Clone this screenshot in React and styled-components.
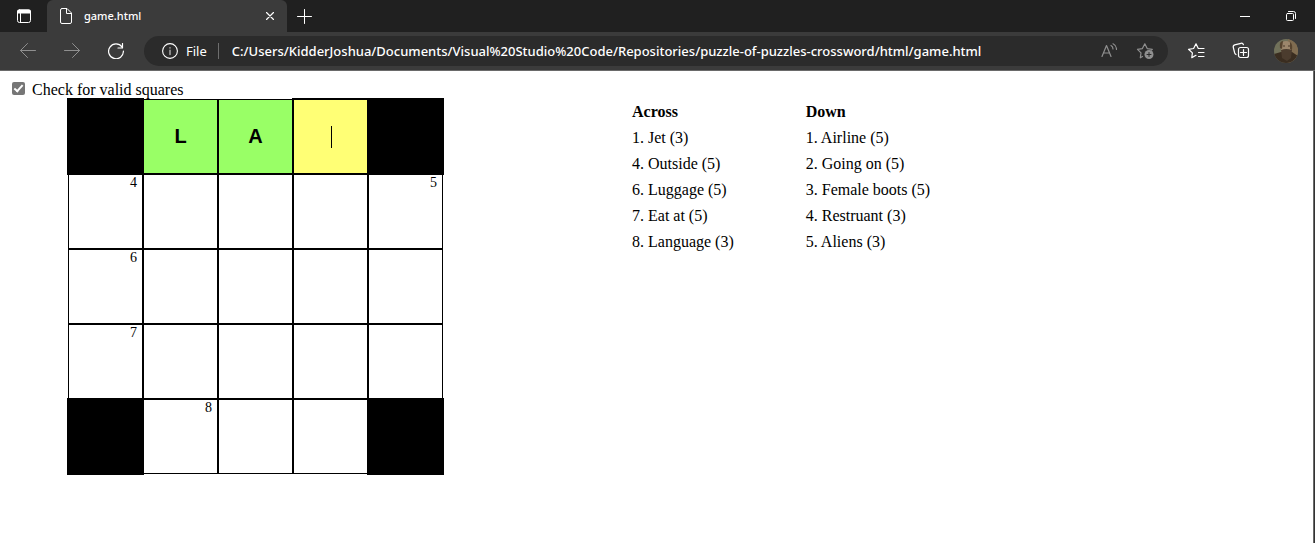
import React, { useState } from "react";
import styled, { createGlobalStyle, css } from "styled-components";

const GlobalStyle = createGlobalStyle`
  *, *::before, *::after { box-sizing: border-box; }
  html, body, #root { height: 100%; }
  body { margin: 0; background: #fff; color: #000; }
`;

const Window = styled.div`
  display: flex;
  flex-direction: column;
  min-height: 100%;
`;

const Chrome = styled.header`
  color: #fff;
  background: #3b3b3b;
  font-family: "Noto Sans", "Open Sans", sans-serif;
  border-bottom: 1px solid #6a6a6a;
`;

const TabStrip = styled.div`
  display: flex;
  align-items: center;
  height: 32px;
  background: #202020;
`;

const ChromeButton = styled.button`
  display: flex;
  align-items: center;
  justify-content: center;
  flex: none;
  width: ${(p) => p.$width}px;
  height: 32px;
  padding: 0;
  border: 0;
  background: none;
  color: ${(p) => (p.$dim ? "#8f8f8f" : "#fff")};

  svg { display: block; }
`;

const Tab = styled.div`
  display: flex;
  align-items: center;
  width: 240px;
  height: 32px;
  padding-left: 11px;
  background: #3b3b3b;
  border-radius: 6px 6px 0 0;
`;

const TabTitle = styled.span`
  flex: 1;
  padding-left: 10px;
  font-size: 11px;
  font-weight: 500;
  line-height: 16px;
`;

const WindowControls = styled.div`
  display: flex;
  margin-left: auto;
`;

const Toolbar = styled.nav`
  display: flex;
  align-items: center;
  height: 38px;
  padding: 0 6px;
`;

const AddressBar = styled.div`
  display: flex;
  align-items: center;
  flex: 1;
  min-width: 0;
  height: 30px;
  margin: 0 5px 0 6px;
  padding: 0 5px 0 18px;
  border-radius: 15px;
  background: #2b2b2b;
`;

const Scheme = styled.span`
  margin-left: 8px;
  padding-right: 11px;
  border-right: 1px solid #6e6e6e;
  font-size: 13px;
  line-height: 16px;
`;

const Url = styled.input`
  flex: 1;
  min-width: 0;
  padding: 0 0 0 13px;
  border: 0;
  outline: 0;
  background: none;
  color: #fff;
  font-family: inherit;
  font-size: 13px;
  font-weight: 500;
  line-height: 16px;
`;

const Avatar = styled.svg`
  border-radius: 50%;
`;

const Page = styled.main`
  flex: 1;
  padding: 10px 12px;
  border-right: 1px solid #333;
  box-shadow: inset -1px 0 #6a6a6a;
  font-family: "Liberation Serif", serif;
  font-size: 16px;
  line-height: 18px;
`;

const CheckLabel = styled.label`
  display: flex;
  align-items: center;
  gap: 7px;
`;

const CheckBox = styled.input`
  appearance: none;
  width: 13px;
  height: 13px;
  margin: 0 0 3px;
  border-radius: 2px;
  background: #767676;
  display: grid;
  place-items: center;

  &:checked::after {
    content: "";
    width: 5px;
    height: 9px;
    margin-bottom: 2px;
    border: solid #fff;
    border-width: 0 2px 2px 0;
    transform: rotate(42deg);
  }
`;

const Game = styled.div`
  display: flex;
  align-items: flex-start;
  padding-left: 56px;
`;

const Board = styled.div`
  display: grid;
  grid-template-columns: repeat(5, 75px);
  grid-auto-rows: 75px;
`;

const Square = styled.div`
  position: relative;
  border: 1px solid #000;
  background: ${(p) => p.$fill};
  ${(p) =>
    p.$raised &&
    css`
      z-index: 1;
      outline: 1px solid #000;
    `}
`;

const Letter = styled.input`
  display: block;
  width: 100%;
  height: 100%;
  padding: 0;
  border: 0;
  outline: 0;
  background: none;
  text-align: center;
  font: bold 20px "Liberation Sans", sans-serif;
`;

const Number = styled.span`
  position: absolute;
  top: 0;
  right: 5px;
  font-size: 14px;
  line-height: 16px;
`;

const Caret = styled.span`
  position: absolute;
  top: 26px;
  left: 50%;
  width: 1px;
  height: 22px;
  background: #000;
`;

const Clues = styled.table`
  margin-left: 187px;
  border-collapse: collapse;
`;

const Heading = styled.th`
  padding: 4px 70px 4px 2px;
  text-align: left;
`;

const Clue = styled.td`
  padding: 4px 70px 4px 2px;
  white-space: nowrap;
`;

const Icon = ({ size = 16, box = 16, children, ...rest }) => (
  <svg
    width={size}
    height={size}
    viewBox={`0 0 ${box} ${box}`}
    fill="none"
    stroke="currentColor"
    strokeLinecap="round"
    strokeLinejoin="round"
    aria-hidden="true"
    {...rest}
  >
    {children}
  </svg>
);

const rows = ["#LA_#", "4...5", "6....", "7....", "#8..#"];

const clues = [
  ["1. Jet (3)", "1. Airline (5)"],
  ["4. Outside (5)", "2. Going on (5)"],
  ["6. Luggage (5)", "3. Female boots (5)"],
  ["7. Eat at (5)", "4. Restruant (3)"],
  ["8. Language (3)", "5. Aliens (3)"],
];

function Cell({ mark, label }) {
  if (mark === "#") return <Square $fill="#000" $raised />;
  const active = mark === "_";
  const letter = /[A-Z]/.test(mark) ? mark : "";
  const fill = active ? "#ffff75" : letter ? "#99ff66" : "#fff";
  return (
    <Square $fill={fill} $raised={active}>
      <Letter aria-label={label} maxLength={1} defaultValue={letter} />
      {/\d/.test(mark) && <Number>{mark}</Number>}
      {active && <Caret />}
    </Square>
  );
}

export default function App() {
  const [checked, setChecked] = useState(true);
  return (
    <Window>
      <GlobalStyle />
      <Chrome>
        <TabStrip>
          <ChromeButton $width={47} aria-label="Tab actions">
            <Icon>
              <path d="M3 1.5h10a2 2 0 0 1 2 2V5.500H1V3.500a2 2 0 0 1 2-2z" fill="currentColor" stroke="none" />
              <rect x="1.500" y="2" width="13" height="12.500" rx="2" />
              <path d="M4.500 5.500v9" />
            </Icon>
          </ChromeButton>
          <Tab>
            <Icon>
              <path d="M4 .5h5l4.500 4.500v9q0 1.500-1.500 1.500H4q-1.500 0-1.500-1.500V2Q2.500 .5 4 .5M8.500 .5V5.500h5" />
            </Icon>
            <TabTitle>game.html</TabTitle>
            <ChromeButton $width={34} aria-label="Close tab">
              <Icon size={8} box={8}>
                <path d="M.5 .5l7 7M7.500 .5l-7 7" strokeWidth="1.200" />
              </Icon>
            </ChromeButton>
          </Tab>
          <ChromeButton $width={34} aria-label="New tab">
            <Icon>
              <path d="M8.500 1.500v14M1.500 8.500h14" />
            </Icon>
          </ChromeButton>
          <WindowControls>
            <ChromeButton $width={44} aria-label="Minimize">
              <Icon size={10} box={10}>
                <path d="M0 5.500h10" />
              </Icon>
            </ChromeButton>
            <ChromeButton $width={48} aria-label="Restore">
              <Icon size={10} box={10}>
                <rect x=".5" y="2.500" width="7" height="7" rx="1" />
                <path d="M2.500 .5h5q2 0 2 2v5" />
              </Icon>
            </ChromeButton>
          </WindowControls>
        </TabStrip>
        <Toolbar>
          <ChromeButton $width={44} $dim aria-label="Back">
            <Icon>
              <path d="M15.500 7.500H.5M7.500 .5l-7 7 7 7" />
            </Icon>
          </ChromeButton>
          <ChromeButton $width={44} $dim aria-label="Forward">
            <Icon>
              <path d="M.5 7.500h15M8.500 .5l7 7-7 7" />
            </Icon>
          </ChromeButton>
          <ChromeButton $width={44} aria-label="Refresh">
            <Icon>
              <path d="M14 4A7.400 7.400 0 1 0 15.400 8M14.500 .5v4.500H10" strokeWidth="1.200" />
            </Icon>
          </ChromeButton>
          <AddressBar>
            <Icon>
              <circle cx="8" cy="8" r="7.400" strokeWidth="1.100" />
              <path d="M8 7.200v4.300M8 4.800v.1" stroke="#aaa" strokeWidth="1.500" />
            </Icon>
            <Scheme>File</Scheme>
            <Url
              aria-label="Address"
              defaultValue="C:/Users/KidderJoshua/Documents/Visual%20Studio%20Code/Repositories/puzzle-of-puzzles-crossword/html/game.html"
            />
            <ChromeButton $width={36} $dim aria-label="Read aloud">
              <Icon>
                <path d="M1 13.500 5.500 2.500 10 13.500M2.500 10h6M10 2.500q2 1 2 3.500M12 .8q3.500 1.700 3.500 5.700" strokeWidth="1.200" />
              </Icon>
            </ChromeButton>
            <ChromeButton $width={36} $dim aria-label="Add to favorites">
              <Icon size={18} box={18}>
                <path d="M6.500 14.500 4.300 15.800 5 10.900 1.500 7.300 6.400 6.600 8.800 1.800 11.200 6.600 16.300 7.300 15.500 8.200" strokeWidth="1.200" />
                <circle cx="13" cy="12.500" r="4.500" fill="currentColor" stroke="none" />
                <path d="M13 10.500v4M11 12.500h4" stroke="#2b2b2b" />
              </Icon>
            </ChromeButton>
          </AddressBar>
          <ChromeButton $width={45} aria-label="Favorites">
            <Icon size={18} box={18}>
              <path d="M9 13.300 4.800 15.600 5.400 10.900 1.500 7.300 6.600 6.500 9 1.800 11.300 6.500H17M11.500 10.500H17M11.500 14.500H17" strokeWidth="1.200" />
            </Icon>
          </ChromeButton>
          <ChromeButton $width={45} aria-label="Collections">
            <Icon size={18} box={18}>
              <path d="M4 12.500Q3 12 2.700 11L1.300 5.500q-.5-2 1.400-2.600L9 1.300q1.800-.4 2.400 1.400" strokeWidth="1.200" />
              <rect x="6.500" y="5.500" width="10" height="10" rx="2" strokeWidth="1.200" />
              <path d="M11.500 7.500v6M8.500 10.500h6" strokeWidth="1.200" />
            </Icon>
          </ChromeButton>
          <ChromeButton $width={46} aria-label="Profile">
            <Avatar width="24" height="24" viewBox="0 0 24 24" aria-hidden="true">
              <rect width="24" height="24" fill="#71715a" />
              <rect x="14" width="10" height="24" fill="#806c50" />
              <path d="M0 24V15l7-2h11l6 4v7z" fill="#3a2d20" />
              <path d="M7 6q1-4 5-4t5 4v7H7z" fill="#9c866b" />
              <path d="M6 9Q5 2 9 2L8 10zM16 3q3 2 2 8l-2-1z" fill="#57442f" />
              <path d="M9 7h2M14 7h2" stroke="#49382a" />
              <path d="M7 11q5-2 11 0l-1 8-4 3-5-3z" fill="#4b3c2e" />
            </Avatar>
          </ChromeButton>
        </Toolbar>
      </Chrome>
      <Page>
        <CheckLabel>
          <CheckBox type="checkbox" checked={checked} onChange={() => setChecked(!checked)} />
          Check for valid squares
        </CheckLabel>
        <Game>
          <Board>
            {rows.map((row, r) =>
              [...row].map((mark, c) => (
                <Cell key={`${r}-${c}`} mark={mark} label={`Row ${r + 1}, column ${c + 1}`} />
              ))
            )}
          </Board>
          <Clues>
            <thead>
              <tr>
                <Heading scope="col">Across</Heading>
                <Heading scope="col">Down</Heading>
              </tr>
            </thead>
            <tbody>
              {clues.map(([across, down]) => (
                <tr key={across}>
                  <Clue>{across}</Clue>
                  <Clue>{down}</Clue>
                </tr>
              ))}
            </tbody>
          </Clues>
        </Game>
      </Page>
    </Window>
  );
}
